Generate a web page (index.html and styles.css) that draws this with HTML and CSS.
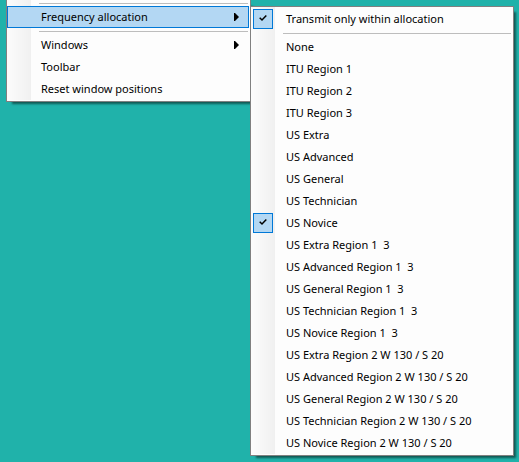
FILE: index.html
```
<!DOCTYPE html>
<html lang="en">
<head>
<meta charset="utf-8">
<title>Frequency allocation</title>
<link rel="stylesheet" href="styles.css">
</head>
<body>
<nav class="menu menu-main">
  <hr class="separator">
  <button class="item item-open" type="button"><span>Frequency allocation</span><svg class="arrow" viewBox="0 0 5 8"><path d="M0 0H1L5 4L1 8H0Z"/></svg></button>
  <hr class="separator">
  <button class="item" type="button"><span>Windows</span><svg class="arrow" viewBox="0 0 5 8"><path d="M0 0H1L5 4L1 8H0Z"/></svg></button>
  <button class="item" type="button">Toolbar</button>
  <button class="item" type="button">Reset window positions</button>

  <div class="menu submenu">
    <label class="item"><input class="tick" type="checkbox" checked><svg class="mark" viewBox="0 0 8 8"><path d="M0.7 3.7L3 6L7.3 1.4"/></svg>Transmit only within allocation</label>
    <hr class="separator">
    <label class="item"><input class="tick" type="checkbox">None</label>
    <label class="item"><input class="tick" type="checkbox">ITU Region 1</label>
    <label class="item"><input class="tick" type="checkbox">ITU Region 2</label>
    <label class="item"><input class="tick" type="checkbox">ITU Region 3</label>
    <label class="item"><input class="tick" type="checkbox">US Extra</label>
    <label class="item"><input class="tick" type="checkbox">US Advanced</label>
    <label class="item"><input class="tick" type="checkbox">US General</label>
    <label class="item"><input class="tick" type="checkbox">US Technician</label>
    <label class="item"><input class="tick" type="checkbox" checked><svg class="mark" viewBox="0 0 8 8"><path d="M0.7 3.7L3 6L7.3 1.4"/></svg>US Novice</label>
    <label class="item"><input class="tick" type="checkbox">US Extra Region 1  3</label>
    <label class="item"><input class="tick" type="checkbox">US Advanced Region 1  3</label>
    <label class="item"><input class="tick" type="checkbox">US General Region 1  3</label>
    <label class="item"><input class="tick" type="checkbox">US Technician Region 1  3</label>
    <label class="item"><input class="tick" type="checkbox">US Novice Region 1  3</label>
    <label class="item"><input class="tick" type="checkbox">US Extra Region 2 W 130 / S 20</label>
    <label class="item"><input class="tick" type="checkbox">US Advanced Region 2 W 130 / S 20</label>
    <label class="item"><input class="tick" type="checkbox">US General Region 2 W 130 / S 20</label>
    <label class="item"><input class="tick" type="checkbox">US Technician Region 2 W 130 / S 20</label>
    <label class="item"><input class="tick" type="checkbox">US Novice Region 2 W 130 / S 20</label>
  </div>
</nav>
</body>
</html>
```
FILE: styles.css
```
* {
  box-sizing: border-box;
}

body {
  display: flow-root;
  margin: 0;
  padding: 0 5px 0 6px;
  min-height: 100vh;
  background: #20b2aa;
  color: #000;
  font: 11px/16px "Noto Sans", "Open Sans", sans-serif;
}

.menu {
  display: flex;
  flex-direction: column;
  padding: 1px 1px 1px 0;
  border: 1px solid #808080;
  background: linear-gradient(90deg, #fcfcfc, #f0f0f0) left top / 24px calc(100% - 1px) no-repeat, #fdfdfd;
  box-shadow: 4px 4px 2px -2px rgba(0, 0, 0, 0.5);
}

.menu-main {
  position: relative;
  width: 245px;
  padding-top: 0;
  border-top: 0;
}

.submenu {
  position: absolute;
  top: 6px;
  left: 100%;
  width: 264px;
}

.separator {
  height: 1px;
  margin: 3px 1px 2px 32px;
  border: 0;
  background: #bdbdbd;
}

.item {
  display: flex;
  align-items: center;
  position: relative;
  width: 100%;
  height: 22px;
  padding: 0 10px 0 34px;
  border: 0;
  background: none;
  color: inherit;
  font: inherit;
  text-align: left;
  white-space: pre;
}

.submenu .item {
  padding-left: 35px;
}

.item-open {
  padding: 0 9px 0 33px;
  border: 1px solid #0078d7;
  background: #b3d7f3;
}

.arrow {
  width: 5px;
  height: 8px;
  margin-left: auto;
}

.tick {
  appearance: none;
  position: absolute;
  left: 2px;
  top: 1px;
  width: 20px;
  height: 20px;
  margin: 0;
}

.tick:checked {
  border: 1px solid #0078d7;
  background: #b3d7f3;
}

.mark {
  position: absolute;
  left: 8px;
  top: 6px;
  width: 8px;
  height: 8px;
  fill: none;
  stroke: #000;
  stroke-width: 1.5;
}
```
